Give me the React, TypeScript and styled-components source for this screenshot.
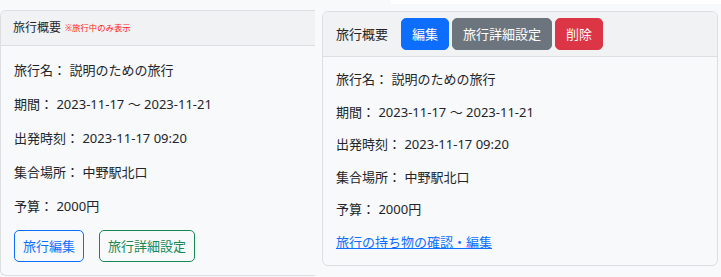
import React from 'react';
import styled, {createGlobalStyle} from 'styled-components';

const GlobalStyle = createGlobalStyle`
  body {
    margin: 0;
    background: #f8f9fb;
    font-family: "Noto Sans", "Noto Sans CJK JP", sans-serif;
    color: #212529;
  }
`

type TripType = {
    name: string
    start: string
    end: string
    departure: string
    place: string
    budget: number
}

const trip: TripType = {
    name: '説明のための旅行',
    start: '2023-11-17',
    end: '2023-11-21',
    departure: '2023-11-17 09:20',
    place: '中野駅北口',
    budget: 2000,
}

const Page = styled.div`
  display: flex;
  width: 721px;
  height: 277px;
  overflow: hidden;`

const LeftColumn = styled.div`
  width: 315px;
  flex-shrink: 0;
  padding-top: 10px;
  box-sizing: border-box;`

const RightColumn = styled.div`
  flex: 1;
  display: flex;
  flex-direction: column;`

const TopStrip = styled.div`
  height: 4px;
  margin-left: 76px;
  background: #ffffff;`

const Card = styled.div<{ cut?: boolean }>`
  background: #f8f9fb;
  border: 1px solid #dcdee2;
  border-radius: ${props => props.cut ? '6px 0 0 6px' : '6px'};
  border-right: ${props => props.cut ? 'none' : '1px solid #dcdee2'};
  overflow: hidden;`

const RightCard = styled(Card)`
  margin: 7px 3px 0 7px;`

const Header = styled.div<{ tall?: boolean }>`
  display: flex;
  align-items: center;
  background: #f1f2f4;
  border-bottom: 1px solid #dcdee2;
  padding: ${props => props.tall ? '6px 13px' : '7px 12px'};
  font-size: ${props => props.tall ? '13px' : '12px'};
  line-height: 20px;`

const Title = styled.span<{ gap: number }>`
  margin-right: ${props => props.gap}px;`

const Note = styled.span`
  color: #ff1a1a;
  font-size: 8.4px;`

const Body = styled.div<{ top: number }>`
  padding: ${props => props.top}px 13px 13px;
  font-size: 13px;
  line-height: 20px;`

const Line = styled.p<{ space: number }>`
  margin: 0 0 ${props => props.space}px;`

const Link = styled.a`
  color: #0d6efd;
  text-decoration: underline;
  cursor: pointer;`

const Buttons = styled.div<{ gap: number }>`
  display: flex;
  gap: ${props => props.gap}px;`

const Button = styled.button<{ color: string, outline?: boolean, pad: number }>`
  font-family: inherit;
  font-size: 13px;
  line-height: 20px;
  height: 32px;
  padding: 0 ${props => props.pad}px;
  border-radius: 5px;
  border: 1px solid ${props => props.color};
  background: ${props => props.outline ? 'transparent' : props.color};
  color: ${props => props.outline ? props.color : '#ffffff'};
  cursor: pointer;`

const Details = ({space}: { space: number }) => (
    <>
        <Line space={space}>旅行名： {trip.name}</Line>
        <Line space={space}>期間： {trip.start} ～ {trip.end}</Line>
        <Line space={space}>出発時刻： {trip.departure}</Line>
        <Line space={space}>集合場所： {trip.place}</Line>
        <Line space={space}>予算： {trip.budget}円</Line>
    </>
)

export default function App() {
    return (
        <Page>
            <GlobalStyle/>
            <LeftColumn>
                <Card cut>
                    <Header>
                        <Title gap={4}>旅行概要</Title>
                        <Note>※旅行中のみ表示</Note>
                    </Header>
                    <Body top={14}>
                        <Details space={14}/>
                        <Buttons gap={15}>
                            <Button color="#0d6efd" outline pad={8}>旅行編集</Button>
                            <Button color="#198754" outline pad={8}>旅行詳細設定</Button>
                        </Buttons>
                    </Body>
                </Card>
            </LeftColumn>
            <RightColumn>
                <TopStrip/>
                <RightCard>
                    <Header tall>
                        <Title gap={13}>旅行概要</Title>
                        <Buttons gap={3}>
                            <Button color="#0d6efd" pad={10}>編集</Button>
                            <Button color="#6c757d" pad={10}>旅行詳細設定</Button>
                            <Button color="#dc3545" pad={10}>削除</Button>
                        </Buttons>
                    </Header>
                    <Body top={12}>
                        <Details space={12.5}/>
                        <Link>旅行の持ち物の確認・編集</Link>
                    </Body>
                </RightCard>
            </RightColumn>
        </Page>
    );
}
